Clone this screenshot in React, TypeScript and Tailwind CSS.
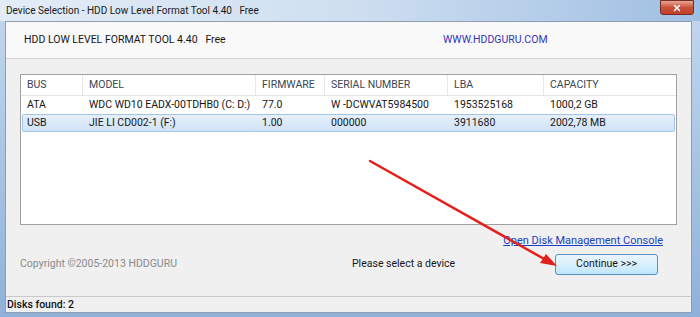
import { X } from "lucide-react";

const cols = [
  { label: "BUS", w: "w-[62px]" },
  { label: "MODEL", w: "w-[173px]" },
  { label: "FIRMWARE", w: "w-[69px]" },
  { label: "SERIAL NUMBER", w: "w-[123px]" },
  { label: "LBA", w: "w-[96px]" },
  { label: "CAPACITY", w: "flex-1" },
];

const disks = [
  ["ATA", "WDC WD10 EADX-00TDHB0 (C: D:)", "77.0", "W -DCWVAT5984500", "1953525168", "1000,2 GB"],
  ["USB", "JIE LI CD002-1 (F:)", "1.00", "000000", "3911680", "2002,78 MB"],
];

export default function App() {
  return (
    <div
      className="relative w-[700px] h-[317px] overflow-hidden bg-gradient-to-b from-[#c4d8ee] to-[#8fb1d9] text-[10.5px] text-[#161616]"
      style={{ fontFamily: 'Roboto, "Open Sans", sans-serif' }}
    >
      {/* title bar */}
      <div className="h-[21px] flex items-center pl-[6px] bg-gradient-to-r from-[#e3ecf6] via-[#cfdff0] to-[#9fbfe3]">
        <span className="whitespace-pre text-[10px] text-[#1a1a1a]">
          Device Selection - HDD Low Level Format Tool 4.40   Free
        </span>
      </div>
      <div className="absolute top-0 right-[6px] w-[34px] h-[15px] rounded-b-[3px] border border-[#7a2b22] bg-gradient-to-b from-[#e8a493] via-[#c9513a] to-[#c2402a] flex items-center justify-center">
        <X className="w-[10px] h-[10px] text-white" strokeWidth={3.5} />
      </div>

      {/* client area */}
      <div className="absolute left-[5px] top-[21px] w-[687px] h-[292px] bg-[#f0f0f0] border border-[#8d9cae] flex flex-col">
        <div className="h-[37px] bg-[#f9f9f9] border-b border-[#d2d2d2] flex items-center pl-[18px]">
          <span className="whitespace-pre w-[419px]">HDD LOW LEVEL FORMAT TOOL 4.40   Free</span>
          <span className="text-[#3434b4]">WWW.HDDGURU.COM</span>
        </div>

        <div className="mx-[14px] mt-[15px] h-[151px] bg-white border border-[#a0a0a0] flex flex-col">
          <div className="h-[21px] flex items-center border-b border-[#e5e5e5]">
            {cols.map((c, i) => (
              <div
                key={c.label}
                className={`${c.w} h-full flex items-center pl-[6px] text-[#3a4555] ${i < cols.length - 1 ? "border-r border-[#e8e8e8]" : ""}`}
              >
                {c.label}
              </div>
            ))}
          </div>
          {disks.map((d, r) => (
            <div
              key={d[0]}
              className={`h-[18px] flex items-center ${r === 1 ? "mx-[1px] rounded-[2px] border border-[#a5c4e8] bg-gradient-to-b from-[#e6f0fb] to-[#cfe2f8]" : "border border-transparent mx-[1px]"}`}
            >
              {d.map((v, i) => (
                <div key={i} className={`${cols[i].w} pl-[5px] whitespace-nowrap ${i === 0 ? "-ml-[1px]" : ""}`}>
                  {v}
                </div>
              ))}
            </div>
          ))}
        </div>

        <div className="flex justify-end pr-[28px] mt-[8px]">
          <span className="text-[#1a3fc4] underline text-[11px]">Open Disk Management Console</span>
        </div>
        <div className="flex items-center mt-[4px] h-[21px]">
          <span className="pl-[14px] w-[346px] text-[#8a8a8a]">Copyright ©2005-2013 HDDGURU</span>
          <span className="w-[203px]">Please select a device</span>
          <button className="w-[103px] h-[21px] rounded-[3px] border border-[#5a8fc0] bg-gradient-to-b from-[#eaf6fd] via-[#d9f0fc] to-[#bee6fd] text-[10.5px] text-[#161616]">
            Continue &gt;&gt;&gt;
          </button>
        </div>

        <div className="mt-auto h-[16px] border-t border-[#c9c9c9] bg-[#f0f0f0] flex items-center pl-[1px]">
          <span className="text-[#111] font-medium">Disks found: 2</span>
        </div>
      </div>

      {/* red arrow annotation */}
      <svg className="absolute inset-0 pointer-events-none" width="700" height="317">
        <line x1="370" y1="161" x2="546" y2="260" stroke="#e3201b" strokeWidth="2.5" strokeLinecap="round" />
        <polygon points="557,266 540,263 546,254" fill="#e3201b" />
      </svg>
    </div>
  );
}
